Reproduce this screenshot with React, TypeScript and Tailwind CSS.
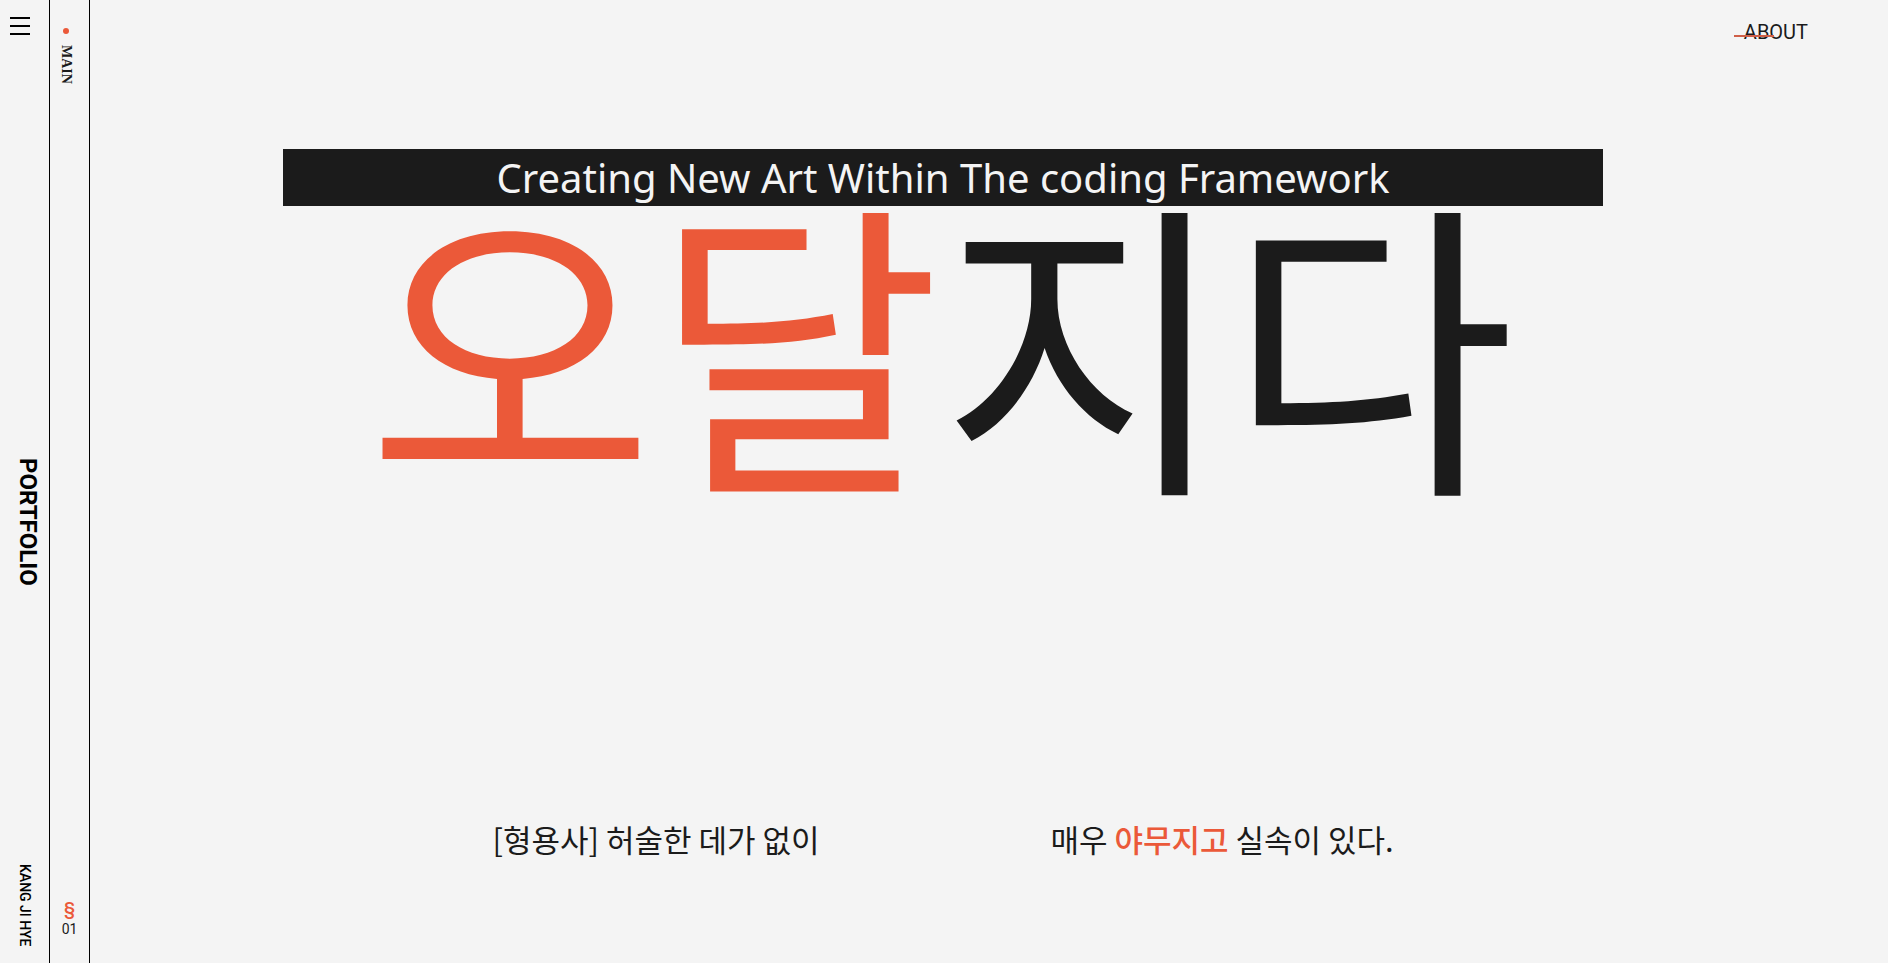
import React from "react";

function Sidebar() {
  return (
    <aside className="flex font-['Roboto',sans-serif]">
      <div className="grid w-[50px] grid-rows-[1fr_auto_1fr] justify-items-center border-r border-black pt-4 pb-4 text-black">
        <button type="button" aria-label="Menu" className="ml-[10px] flex h-5 w-5 flex-col justify-between justify-self-start py-[1px]">
          <span className="h-[2px] w-full bg-black" />
          <span className="h-[2px] w-full bg-black" />
          <span className="h-[2px] w-full bg-black" />
        </button>
        <p className="ml-[6px] pt-20 text-[24px] leading-8 font-bold [writing-mode:vertical-rl]">PORTFOLIO</p>
        <p className="self-end text-[14px] leading-6 font-medium [writing-mode:vertical-rl]">KANG JI HYE</p>
      </div>
      <div className="flex w-10 flex-col items-center justify-between border-r border-black pt-7 pb-6 text-[#1b1b1b]">
        <a href="#main" className="mr-2 flex flex-col items-center gap-[11px]">
          <span className="h-[6px] w-[6px] rounded-full bg-[#eb5939]" />
          <span className="font-['Liberation_Serif',serif] text-[14px] leading-5 font-bold [writing-mode:vertical-rl]">MAIN</span>
        </a>
        <div className="flex flex-col items-center">
          <span className="text-[18px] leading-5 font-medium text-[#eb5939]">§</span>
          <span className="text-[14px] leading-5">01</span>
        </div>
      </div>
    </aside>
  );
}

export default function App() {
  return (
    <div className="flex min-h-screen bg-[#f4f4f4] font-['Noto_Sans','Noto_Sans_CJK_KR',sans-serif] text-[#1b1b1b]">
      <Sidebar />
      <div className="flex flex-1 flex-col">
        <header className="flex h-[149px] justify-end pt-5 pr-20">
          <a href="#about" className="relative h-6 font-['Roboto',sans-serif] text-[20px] leading-6 font-normal">
            ABOUT
            <span className="absolute top-[15px] -left-[10px] h-[2px] w-10 bg-[#cf5f48]" />
          </a>
        </header>
        <main className="flex flex-1 flex-col items-center pr-[92px] pb-[104px]">
          <p className="w-full max-w-[1320px] bg-[#1b1b1b] text-center text-[40px] leading-[57px] text-[#f4f4f4]">
            Creating New Art Within The coding Framework
          </p>
          <h1 className="pr-1 font-['Noto_Sans_CJK_KR',sans-serif] text-[312px] leading-[258px] whitespace-nowrap">
            <span className="text-[#eb5939]">오달</span>지다
          </h1>
          <div className="mt-auto grid w-full max-w-[1140px] grid-cols-2 pr-2 text-center font-['Noto_Sans_CJK_KR',sans-serif] text-[31px] leading-10">
            <p>[형용사] 허술한 데가 없이</p>
            <p>
              매우 <strong className="font-medium text-[#eb5939]">야무지고</strong> 실속이 있다.
            </p>
          </div>
        </main>
      </div>
    </div>
  );
}
